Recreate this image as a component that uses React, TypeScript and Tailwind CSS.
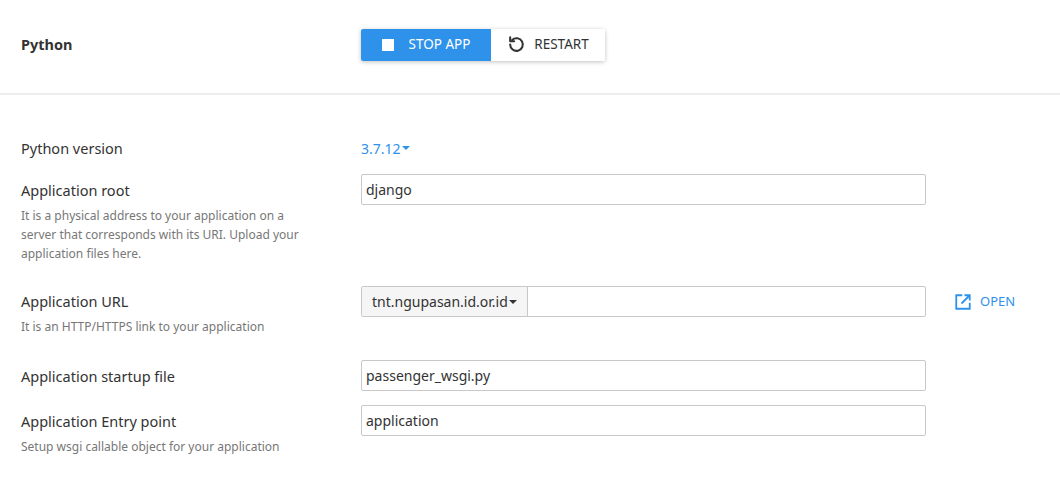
export default function App() {
  const input = "h-[31px] w-[565px] border border-[#c8c8c8] rounded-[2px] px-[4px] flex items-center text-[14px] text-[#333] font-['Roboto',sans-serif]";
  const label = "text-[14.5px] text-[#333] leading-[18px]";
  const desc = "text-[12px] text-[#777] leading-[19px] mt-[7px]";
  return (
    <div className="w-[1060px] h-[491px] bg-white font-['Open_Sans',sans-serif] overflow-hidden">
      <div className="h-[95px] border-b-2 border-[#ececec] flex items-center pl-[21px] pb-[4px]">
        <div className="w-[340px] text-[14.5px] font-bold text-[#333]">Python</div>
        <div className="flex shadow-[0_1px_4px_rgba(0,0,0,0.25)] rounded-[2px]">
          <button className="h-[32px] w-[130px] bg-[#2e92ea] text-white text-[13.5px] flex items-center justify-center gap-[15px] rounded-l-[2px] font-['Open_Sans',sans-serif]">
            <span className="w-[12px] h-[12px] bg-white inline-block" />STOP APP
          </button>
          <button className="h-[32px] w-[114px] bg-white text-[#333] text-[13.5px] flex items-center justify-center gap-[8px] rounded-r-[2px]">
            <svg width="19" height="19" viewBox="0 0 24 24" fill="none" stroke="#333" strokeWidth="2.6" strokeLinecap="round"><path d="M4 12a8 8 0 1 0 2.5-5.8" /><path d="M4 3v5h5" strokeLinejoin="round" /></svg>
            RESTART
          </button>
        </div>
      </div>
      <div className="pl-[21px] pt-[44px]">
        <div className="flex items-center h-[18px]">
          <div className={`w-[340px] ${label}`}>Python version</div>
          <div className="text-[14px] text-[#2e92ea] font-['Roboto',sans-serif] flex items-center">3.7.12<span className="ml-[1px] border-x-[4px] border-x-transparent border-t-[4px] border-t-[#2e92ea] w-0 h-0" /></div>
        </div>
        <div className="flex mt-[17px]">
          <div className="w-[340px] pt-[7px]">
            <div className={label}>Application root</div>
            <div className={desc + " w-[300px]"}>It is a physical address to your application on a server that corresponds with its URI. Upload your application files here.</div>
          </div>
          <div className={input}>django</div>
        </div>
        <div className="flex mt-[23px] items-start">
          <div className="w-[340px] pt-[6px]">
            <div className={label}>Application URL</div>
            <div className={desc}>It is an HTTP/HTTPS link to your application</div>
          </div>
          <div className="h-[31px] w-[565px] border border-[#c8c8c8] rounded-[2px] flex text-[14px] text-[#333] font-['Roboto',sans-serif]">
            <div className="bg-[#f5f5f5] border-r border-[#c8c8c8] px-[10px] flex items-center">tnt.ngupasan.id.or.id<span className="ml-[1px] border-x-[4px] border-x-transparent border-t-[4px] border-t-[#333] w-0 h-0" /></div>
          </div>
          <div className="ml-[28px] h-[31px] flex items-center gap-[8px] text-[#2e92ea] text-[13px] font-['Roboto',sans-serif]">
            <svg width="18" height="18" viewBox="0 0 24 24" fill="none" stroke="#2e92ea" strokeWidth="2.4"><path d="M11 3H3v18h18v-8" /><path d="M14 3h7v7M21 3 10 14" /></svg>
            OPEN
          </div>
        </div>
        <div className="flex mt-[24px] items-center">
          <div className={`w-[340px] ${label}`}>Application startup file</div>
          <div className={input}>passenger_wsgi.py</div>
        </div>
        <div className="flex mt-[14px] items-start">
          <div className="w-[340px] pt-[7px]">
            <div className={label}>Application Entry point</div>
            <div className={desc}>Setup wsgi callable object for your application</div>
          </div>
          <div className={input}>application</div>
        </div>
      </div>
    </div>
  );
}
